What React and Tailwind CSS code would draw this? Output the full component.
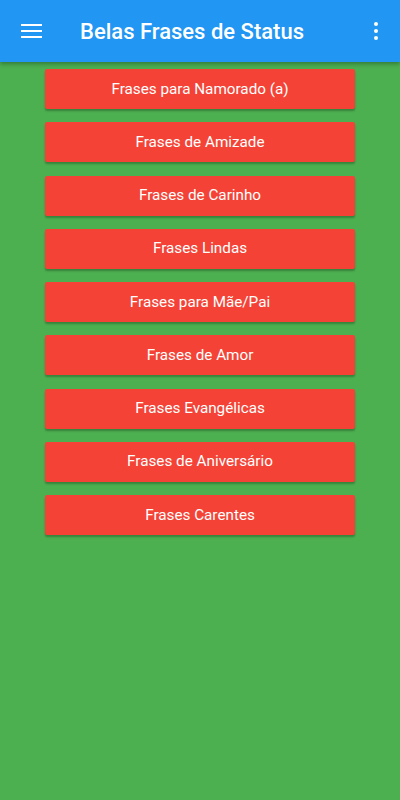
import React from 'react';

const items = [
  'Frases para Namorado (a)',
  'Frases de Amizade',
  'Frases de Carinho',
  'Frases Lindas',
  'Frases para Mãe/Pai',
  'Frases de Amor',
  'Frases Evangélicas',
  'Frases de Aniversário',
  'Frases Carentes',
];

export default function App() {
  return (
    <div className="min-h-[800px] w-[400px] bg-[#4caf50] font-['Roboto',sans-serif]">
      {/* Toolbar */}
      <div className="relative z-10 flex h-[62px] items-center bg-[#2196f3] shadow-[0_2px_4px_rgba(0,0,0,0.3)]">
        <div className="ml-[21px] flex flex-col gap-[4px]">
          <span className="block h-[2px] w-[21px] bg-white" />
          <span className="block h-[2px] w-[21px] bg-white" />
          <span className="block h-[2px] w-[21px] bg-white" />
        </div>
        <h1 className="ml-[38px] mt-[2px] text-[22px] font-medium leading-none text-white">
          Belas Frases de Status
        </h1>
        <div className="ml-auto mr-[22px] flex flex-col gap-[3px]">
          <span className="block h-[4px] w-[4px] rounded-full bg-white" />
          <span className="block h-[4px] w-[4px] rounded-full bg-white" />
          <span className="block h-[4px] w-[4px] rounded-full bg-white" />
        </div>
      </div>

      {/* Buttons */}
      <div className="flex flex-col items-center gap-[13.25px] pt-[7px]">
        {items.map((item) => (
          <button
            key={item}
            className="flex h-[40px] w-[310px] items-center justify-center rounded-[2px] bg-[#f44336] text-[15.25px] text-white shadow-[0_2px_2px_rgba(0,0,0,0.25)]"
          >
            {item}
          </button>
        ))}
      </div>
    </div>
  );
}
